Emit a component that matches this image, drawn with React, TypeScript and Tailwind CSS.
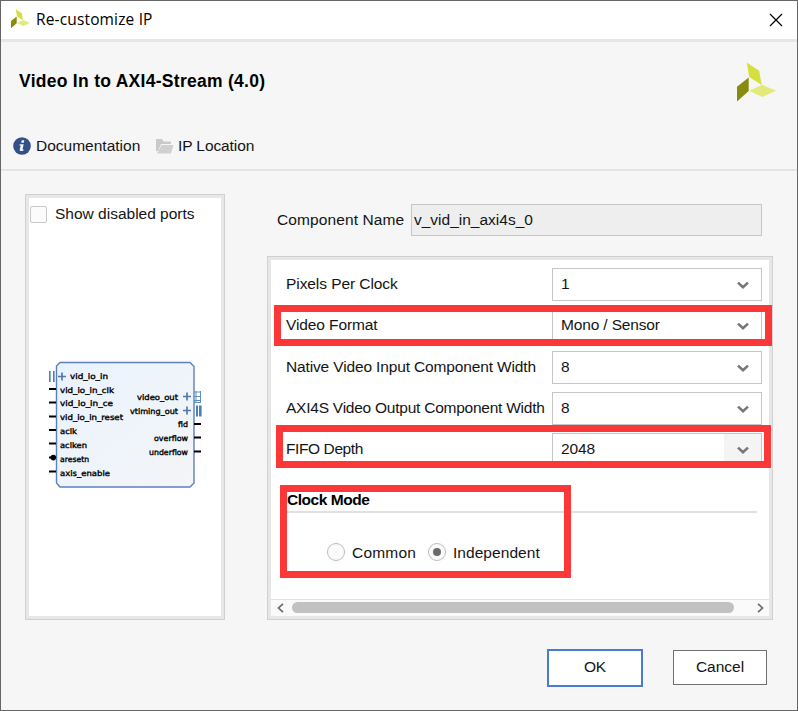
import React from "react";

function Logo({ size }: { size: number }) {
  return (
    <svg width={size} height={size} viewBox="0 0 40 40" className="block shrink-0 overflow-visible">
      <path d="M10 0.5 22.7 9 25.4 23.5 12.6 15.5Z" fill="#d5df3d" />
      <path d="M0 25.5 12 15.8V29.8L0 40.5Z" fill="#868c0c" />
      <path d="M12.6 29.6 25.8 23.3 40 29.6 26 36Z" fill="#e3ea7c" />
    </svg>
  );
}

function Chevron() {
  return (
    <svg width="12" height="9" viewBox="0 0 12 9" className="block">
      <path d="M1 1.6 6 6.2 11 1.6" fill="none" stroke="#777" strokeWidth="2.6" />
    </svg>
  );
}

type Option = { label: string; value: string; spacing: string; hover?: boolean };

const options: Option[] = [
  { label: "Pixels Per Clock", value: "1", spacing: "tracking-[-0.07px]" },
  { label: "Video Format", value: "Mono / Sensor", spacing: "tracking-[-0.1px]" },
  { label: "Native Video Input Component Width", value: "8", spacing: "tracking-[-0.14px]" },
  { label: "AXI4S Video Output Component Width", value: "8", spacing: "tracking-[-0.24px]" },
  { label: "FIFO Depth", value: "2048", spacing: "tracking-[-0.4px]", hover: true },
];

function OptionRow({ label, value, spacing, hover }: Option) {
  return (
    <div className="flex h-[41.25px] items-start">
      <div className={`w-[266px] whitespace-nowrap leading-[31px] ${spacing}`}>{label}</div>
      <div className="flex h-[33px] w-[210px] border border-[#c6c6c6] bg-white">
        <div className="flex-1 pl-2 leading-[29px] tracking-[-0.15px]">{value}</div>
        <div className={`flex w-[37px] items-center justify-center pt-[2px] ${hover ? "bg-[#f4f4f4]" : ""}`}>
          <Chevron />
        </div>
      </div>
    </div>
  );
}

const leftPorts = ["vid_io_in_clk", "vid_io_in_ce", "vid_io_in_reset", "aclk", "aclken", "aresetn", "axis_enable"];
const leftWidths = [54, 53, 63, 17, 27, 29, 50];
const rightPorts = ["video_out", "vtiming_out", "fid", "overflow", "underflow"];
const rightWidths = [41, 48, 10, 34, 39];

function BlockSymbol() {
  return (
    <svg width="156" height="130" viewBox="0 0 156 130" className="block">
      <defs>
        <linearGradient id="body" x1="0" x2="1" y1="0" y2="1">
          <stop offset="0" stopColor="#e9f3fe" />
          <stop offset="1" stopColor="#f4f5f7" />
        </linearGradient>
      </defs>
      <path d="M11 2.5H141L145 6.5V123L141 127H11L7.500 123V6Z" fill="url(#body)" stroke="#5b80bd" strokeWidth="1.4" />
      <g fill="#4c7fb5">
        <rect x="0" y="11" width="1.6" height="11" />
        <rect x="4" y="11" width="1.6" height="11" />
        <rect x="147" y="45.500" width="2" height="11" />
        <rect x="150" y="45.500" width="2.600" height="11" />
      </g>
      <path d="M145 32h7M145 36.500h7M145 40.500h7M145 42.500h7M147 31v12M151.500 31v12" stroke="#5f8fc2" fill="none" />
      <g stroke="#5577ae" strokeWidth="1.700">
        <path d="M9 16.500h8M13 12.500v8M134 36.500h8M138 32.500v8M134 50.500h8M138 46.500v8" />
      </g>
      <g fontFamily="'DejaVu Sans', sans-serif" fontSize="7.800" fill="#000" stroke="#000" strokeWidth="0.350">
        <text x="21" y="18.800" textLength="38" lengthAdjust="spacingAndGlyphs">vid_io_in</text>
        {leftPorts.map((port, i) => (
          <text key={port} x="11" y={32.5 + i * 13.95} textLength={leftWidths[i]} lengthAdjust="spacingAndGlyphs">
            {port}
          </text>
        ))}
        {rightPorts.map((port, i) => (
          <text
            key={port}
            x={(i < 2 ? 129 : 139) - rightWidths[i]}
            y={39.8 + i * 13.8}
            textLength={rightWidths[i]}
            lengthAdjust="spacingAndGlyphs"
          >
            {port}
          </text>
        ))}
      </g>
      <path d="M0 29h7M0 42.500h7M0 56.500h7M0 70h7M0 83.500h7M0 97.500h4M0 111.500h7M145 64h7M145 77.500h7M145 91.500h7" stroke="#000" strokeWidth="2" />
      <circle cx="4.300" cy="97.600" r="2.800" />
    </svg>
  );
}

export default function App() {
  return (
    <div className="relative flex h-[711px] w-[798px] flex-col overflow-hidden border border-[#666] bg-[#f6f6f6] font-['Liberation_Sans',Arial,sans-serif] text-[15.5px] text-[#141414]">
      <div className="flex h-[41px] shrink-0 items-center border-b-[3px] border-[#e6e6e6] bg-white pl-[10px] pr-[14px]">
        <div className="pb-[3px]">
          <Logo size={19} />
        </div>
        <div className="ml-[6px] flex-1 pb-px font-['Open_Sans','Noto_Sans',sans-serif] text-[15.5px] tracking-[0.15px] text-black">
          Re-customize IP
        </div>
        <svg width="14" height="14" viewBox="0 0 14 14">
          <path d="M1 1 13 13M13 1 1 13" stroke="#000" strokeWidth="1.200" />
        </svg>
      </div>

      <div className="flex h-[129px] shrink-0 flex-col border-b-2 border-[#e4e4e4]">
        <div className="flex h-[79px] items-center justify-between pl-[18px] pr-[21px]">
          <h1 className="text-[17.5px] font-bold tracking-[0.28px] text-black">Video In to AXI4-Stream (4.0)</h1>
          <Logo size={39} />
        </div>
        <div className="mt-[13px] flex items-center pl-[12px] leading-[24px]">
          <svg width="18" height="18" viewBox="0 0 18 18">
            <circle cx="9" cy="9" r="8.800" fill="#33508a" />
            <path d="M8.700 3.300h2.600l-.5 2.400H8.200ZM6.700 7.200h4l-1.200 5.400 1.300-.2-.4 1.200c-1.700.9-4.100.7-3.600-1.400l.9-3.800-1.300.1Z" fill="#f6f6f6" />
          </svg>
          <span className="ml-[5px] w-[120px]">Documentation</span>
          <svg width="18" height="15" viewBox="0 0 18 15">
            <path d="M0 0H6L7.500 2.500H15V5H5L2 12H0Z" fill="#c9c9c9" />
            <path d="M5.500 6H17.500L15 14.500H1Z" fill="#d0d0d0" />
          </svg>
          <span className="ml-[4px] tracking-[-0.1px]">IP Location</span>
        </div>
      </div>

      <div className="flex h-[449px] shrink-0 pl-[24px] pt-[23px]">
        <div className="h-[426px] w-[200px] shrink-0 border border-[#d0d0d0] bg-white">
          <div className="h-full border-[3px] border-[#e7e7e7]">
            <div className="flex h-[31px] items-center pl-[1px] pt-[1px]">
              <span className="h-[17px] w-[17px] rounded-[2px] border border-[#c8c8c8] bg-[#fbfbfb]" />
              <span className="ml-[8px] whitespace-nowrap">Show disabled ports</span>
            </div>
            <div className="ml-[20px] mt-[131px]">
              <BlockSymbol />
            </div>
          </div>
        </div>

        <div className="ml-[42px] w-[506px]">
          <div className="mt-[10px] flex h-[32px]">
            <span className="w-[144px] shrink-0 whitespace-nowrap pl-[10px] leading-[31px] tracking-[0.1px]">
              Component Name
            </span>
            <div className="w-[351px] border border-[#c6c6c6] bg-[#eee] pl-[2px] leading-[29px]">v_vid_in_axi4s_0</div>
          </div>
          <div className="mt-[20px] h-[364px] border border-[#d0d0d0] bg-white">
            <div className="flex h-full flex-col border-[3px] border-[#e7e7e7]">
              <div className="pl-[15px] pt-[8px]">
                {options.map((option) => (
                  <OptionRow key={option.label} {...option} />
                ))}
              </div>
              <div className="ml-[16px] mt-[15px] h-[24px] w-[470px] border-b-2 border-[#e0e0e0] font-bold leading-[22px] tracking-[-0.45px] text-black">
                Clock Mode
              </div>
              <div className="mt-[27px] flex h-[24px] items-center pl-[56px]">
                <span className="h-[18px] w-[18px] rounded-full border border-[#bdbdbd] bg-[#fbfbfb]" />
                <span className="ml-[7px] w-[76px] tracking-[0.2px]">Common</span>
                <span className="flex h-[18px] w-[18px] items-center justify-center rounded-full border border-[#bdbdbd] bg-[#fbfbfb]">
                  <span className="h-[8px] w-[8px] rounded-full bg-[#6c6c6c]" />
                </span>
                <span className="ml-[7px] tracking-[0.05px]">Independent</span>
              </div>
              <div className="mt-auto flex h-[17px] items-center border-t border-[#e2e2e2] bg-[#fafafa] pb-px pl-[6px] pr-[5px]">
                <svg width="7" height="10" viewBox="0 0 7 10">
                  <path d="M6 .8 1.500 5 6 9.200" fill="none" stroke="#6b6b6b" strokeWidth="1.700" />
                </svg>
                <div className="ml-[8px] h-[11px] w-[442px] rounded-full bg-[#c1c1c1]" />
                <svg width="7" height="10" viewBox="0 0 7 10" className="ml-auto">
                  <path d="M1 .8 5.500 5 1 9.200" fill="none" stroke="#6b6b6b" strokeWidth="1.700" />
                </svg>
              </div>
            </div>
          </div>
        </div>
      </div>

      <div className="flex pl-[546px] pt-[29px]">
        <button className="h-[38px] w-[96px] border-2 border-[#4a7bd3] bg-white pb-[2px] tracking-[-0.2px]">OK</button>
        <button className="ml-[30px] mt-px h-[35px] w-[94px] border border-[#707070] bg-white pb-px">Cancel</button>
      </div>

      <div className="absolute left-[273px] top-[304px] h-[41px] w-[498px] border-[7px] border-[#fc3737]" />
      <div className="absolute left-[275px] top-[424px] h-[43px] w-[495px] border-[7px] border-[#fc3737]" />
      <div className="absolute left-[279px] top-[484px] h-[93px] w-[291px] border-[7px] border-[#fc3737]" />
    </div>
  );
}
